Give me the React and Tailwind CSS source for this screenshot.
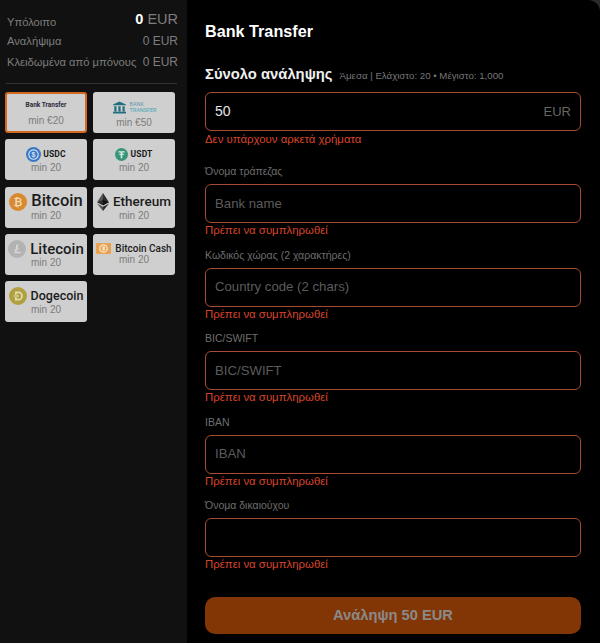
import React from "react";

const font = "font-['Liberation_Sans',Arial,sans-serif]";
const logoFont = "font-['Roboto',sans-serif]";

function Coin({ color, children, size = 18 }) {
    return (
        <svg width={size} height={size} viewBox="0 0 24 24" className="shrink-0">
            <circle cx="12" cy="12" r="12" fill={color} />
            {children}
        </svg>
    );
}

const bitcoinIcon = (
    <Coin color="#d98a2f">
        <text x="12" y="17" textAnchor="middle" fontSize="14" fontWeight="700" fill="#f0d9b8" fontFamily="Liberation Sans">₿</text>
    </Coin>
);

const litecoinIcon = (
    <Coin color="#b3b3b3">
        <path d="M11 6h3l-1.4 5.2 2-.7-.5 1.700-2 .7-.8 2.800h6l-.5 2H8.700l1.100-4-1.700.6.4-1.600 1.800-.7z" fill="#d6d6d6" />
    </Coin>
);

const dogeIcon = (
    <Coin color="#b0a03f">
        <path d="M8 6h4.500a6 6 0 0 1 0 12H8zm2.300 2.200v7.600h2.200a3.800 3.800 0 0 0 0-7.600zM6.500 11h6.500v2H6.500z" fill="#e3dcae" fillRule="evenodd" />
    </Coin>
);

const ethIcon = (
    <svg width="12" height="18" viewBox="0 0 12 18" className="shrink-0">
        <path d="M6 0 0 9.200 6 7z" fill="#555" />
        <path d="M6 0l6 9.200L6 7z" fill="#2c2c2c" />
        <path d="M0 9.200 6 6.600v6z" fill="#2c2c2c" />
        <path d="M12 9.200 6 6.600v6z" fill="#111" />
        <path d="M0 10.400 6 18v-4.200z" fill="#555" />
        <path d="M12 10.400 6 18v-4.200z" fill="#2c2c2c" />
    </svg>
);

const bchIcon = (
    <svg width="15" height="11" viewBox="0 0 15 11" className="shrink-0">
        <rect width="15" height="11" rx="1" fill="#e9a24f" />
        <circle cx="7.500" cy="5.500" r="3.700" fill="none" stroke="#f8e6cf" strokeWidth="1.200" />
        <path d="M6.500 3.500h1.600a1 1 0 0 1 0 2 1 1 0 0 1 0 2H6.500z" fill="#f8e6cf" />
    </svg>
);

function BankLogo() {
    return (
        <div className="flex items-center gap-[3px] h-[14px] ml-[2px]">
            <svg width="13" height="13" viewBox="0 0 15 14">
                <path d="M7.500 0 15 3.500v1H0v-1z" fill="#1f6f7f" />
                <path d="M1.500 5.500h2.500v6H1.500zM6.200 5.500h2.600v6H6.200zM11 5.500h2.500v6H11zM0 12h15v2H0z" fill="#1f6f7f" />
            </svg>
            <div className={`${logoFont} text-[5.500px] leading-[5.500px] text-[#45a5b5] text-left mt-[1px]`}>
                <div className="text-[#6a9aa8]">BANK</div>
                <div>TRANSFER</div>
            </div>
        </div>
    );
}

function UsdLogo({ label, color }) {
    const isUsdc = label === "USDC";
    return (
        <div className="flex items-center gap-[2px] h-[14px]">
            <Coin color={color} size={isUsdc ? 15 : 13}>
                {isUsdc ? (
                    <>
                        <circle cx="12" cy="12" r="7.500" fill="none" stroke="#d4e2f4" strokeWidth="1.800" />
                        <text x="12" y="16" textAnchor="middle" fontSize="11" fontWeight="700" fill="#d4e2f4" fontFamily="Liberation Sans">$</text>
                    </>
                ) : (
                    <path d="M6 6h12v2.500h-4.500v2c2.500.2 4 .6 4 1.200s-1.500 1-4 1.200V19h-3v-6.100c-2.500-.2-4-.6-4-1.200s1.500-1 4-1.200v-2H6z" fill="#d5ebe3" />
                )}
            </Coin>
            <span className={`${logoFont} font-bold text-[8.500px] text-[#1a1a1a] tracking-[0.2px]`}>{label}</span>
        </div>
    );
}

function CoinLogo({ icon, name, textClass }) {
    return (
        <div className="flex items-center gap-[4px] h-[20px]">
            {icon}
            <span className={`${logoFont} font-medium text-[#1c1c1c] whitespace-nowrap ${textClass}`}>{name}</span>
        </div>
    );
}

const methods = [
    { logo: <span className={`${logoFont} font-bold text-[6.500px] text-[#2a2a3a] -mt-[2px]`}>Bank Transfer</span>, min: "min €20", active: true, minClass: "-mt-[1px]" },
    { logo: <BankLogo />, min: "min €50", minClass: "mt-[1px]" },
    { logo: <UsdLogo label="USDC" color="#3a79c4" />, min: "min 20", minClass: "-mt-[1px]" },
    { logo: <UsdLogo label="USDT" color="#3a9478" />, min: "min 20", minClass: "-mt-[1px]" },
    { logo: <CoinLogo icon={bitcoinIcon} name="Bitcoin" textClass="text-[16.500px]" />, min: "min 20", minClass: "-mt-[1px]" },
    { logo: <CoinLogo icon={ethIcon} name="Ethereum" textClass="text-[13.500px]" />, min: "min 20", minClass: "-mt-[1px]" },
    { logo: <CoinLogo icon={litecoinIcon} name="Litecoin" textClass="text-[15px]" />, min: "min 20", minClass: "-mt-[1px]" },
    { logo: <CoinLogo icon={bchIcon} name="Bitcoin Cash" textClass="text-[10px]" />, min: "min 20", minClass: "-mt-[4px]" },
    { logo: <CoinLogo icon={dogeIcon} name="Dogecoin" textClass="text-[12.500px]" />, min: "min 20", minClass: "-mt-[1px]" },
];

const fields = [
    { label: "Όνομα τράπεζας", placeholder: "Bank name" },
    { label: "Κωδικός χώρας (2 χαρακτήρες)", placeholder: "Country code (2 chars)" },
    { label: "BIC/SWIFT", placeholder: "BIC/SWIFT" },
    { label: "IBAN", placeholder: "IBAN" },
    { label: "Όνομα δικαιούχου", placeholder: "" },
];

function Balance({ label, value, big }) {
    return (
        <div className="flex justify-between items-baseline h-[21px] text-[12px] text-[#7d7d7d] whitespace-nowrap">
            <span className="text-[11.200px]">{label}</span>
            <span className={big ? "text-[14.500px] -translate-y-[2px]" : ""}>
                {big && <b className="font-bold text-white">0 </b>}
                {value}
            </span>
        </div>
    );
}

export default function App() {
    return (
        <div className={`${font} flex h-[643px] w-[600px] overflow-hidden bg-[#2a2a2a]`}>
            <aside className="w-[187px] shrink-0 bg-[#111111] pl-[5px] pt-[11px]">
                <div className="w-[173px] pl-[2px]">
                    <Balance label="Υπόλοιπο" value="EUR" big />
                    <Balance label="Αναλήψιμα" value="0 EUR" />
                    <Balance label="Κλειδωμένα από μπόνους" value="0 EUR" />
                </div>
                <div className="w-[171px] h-px bg-[#333333] ml-[1px] mt-[9px] mb-[8px]" />
                <div className="grid grid-cols-[82px_82px] gap-x-[6px] gap-y-[6.250px]">
                    {methods.map((m, i) => (
                        <button
                            key={i}
                            className={`h-[41px] rounded-[3px] flex flex-col items-center bg-[#cfcfcf] ${m.active ? "border-2 border-[#d2691e] pt-[4px]" : "pt-[6px]"}`}
                        >
                            <div className="h-[18px] flex items-center justify-center">{m.logo}</div>
                            <span className={`text-[10px] leading-[12px] text-[#7c7c7c] ${m.minClass}`}>{m.min}</span>
                        </button>
                    ))}
                </div>
            </aside>
            <main className="flex-1 bg-black rounded-tr-[12px] pl-[18px] pr-[19px] pt-[22px]">
                <h1 className="text-[16.200px] leading-[18px] font-bold text-white">Bank Transfer</h1>
                <div className="flex items-baseline gap-[7px] mt-[23px] h-[20px]">
                    <span className="text-[14.800px] font-bold text-[#f0f0f0]">Σύνολο ανάληψης</span>
                    <span className="text-[9.700px] text-[#777777]">Άμεσα | Ελάχιστο: 20 • Μέγιστο: 1,000</span>
                </div>
                <div className="mt-[9px] h-[39px] rounded-[6px] border border-[#a84a36] flex items-center justify-between pl-[9px] pr-[9px]">
                    <span className="text-[14px] text-[#e6e6e6]">50</span>
                    <span className="text-[13px] text-[#666666]">EUR</span>
                </div>
                <p className="text-[11.400px] leading-[14px] mt-[1px] text-[#d9442b]">Δεν υπάρχουν αρκετά χρήματα</p>
                {fields.map((f, i) => (
                    <div key={f.label} className={i === 0 ? "mt-[19px]" : "mt-[11.500px]"}>
                        <label className="block text-[10.500px] leading-[12px] text-[#6e6e6e]">{f.label}</label>
                        <div className="mt-[7px] h-[39px] rounded-[6px] border border-[#a84a36] flex items-center pl-[9px] text-[13.200px] text-[#5c5c5c]">
                            {f.placeholder}
                        </div>
                        <p className="text-[11.400px] leading-[14px] text-[#d9442b]">Πρέπει να συμπληρωθεί</p>
                    </div>
                ))}
                <button className="w-full h-[37px] mt-[26px] rounded-[10px] bg-[#823605] text-[14.700px] font-bold text-[#8a8a8a]">
                    Ανάληψη 50 EUR
                </button>
            </main>
        </div>
    );
}
